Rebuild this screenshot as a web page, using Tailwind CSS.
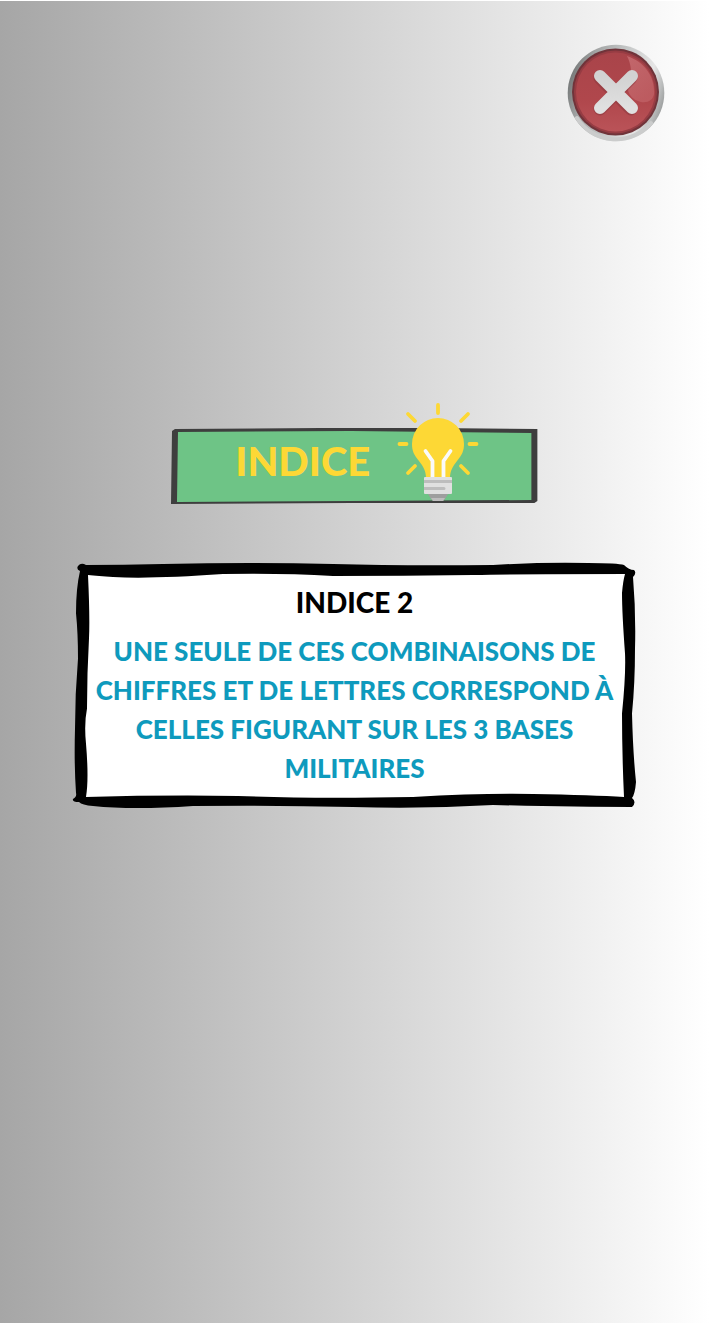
<!DOCTYPE html>
<html lang="fr">
<head>
<meta charset="utf-8">
<meta name="viewport" content="width=device-width, initial-scale=1">
<title>Indice 2</title>
<script src="https://cdn.jsdelivr.net/npm/@tailwindcss/browser@4"></script>
</head>
<body class="min-h-screen bg-white pt-px font-['Lato','Open_Sans',sans-serif]">
<main class="flex min-h-screen flex-col items-center bg-linear-to-r from-[#a6a6a6] to-white px-11 pt-[43px] pb-12">
  <button type="button" aria-label="Fermer" class="size-[98px] cursor-pointer self-end rounded-full">
    <svg viewBox="0 0 98 98" class="size-full" aria-hidden="true">
      <defs>
        <linearGradient id="rim" x1="0" y1=".3" x2="1" y2=".6">
          <stop offset="0" stop-color="#6f7272"/><stop offset=".2" stop-color="#a2a4a4"/><stop offset=".5" stop-color="#c6c8c8"/><stop offset=".8" stop-color="#e6e6e6"/><stop offset=".93" stop-color="#b9bbbb"/><stop offset="1" stop-color="#9b9d9d"/>
        </linearGradient>
        <linearGradient id="red" x1="0" y1="0" x2="0" y2="1">
          <stop offset="0" stop-color="#a9444a"/><stop offset=".6" stop-color="#b0474c"/><stop offset="1" stop-color="#ba5358"/>
        </linearGradient>
        <linearGradient id="shine" x1="0" y1="0" x2=".5" y2="1">
          <stop offset="0" stop-color="#d07a7e" stop-opacity=".65"/><stop offset="1" stop-color="#d07a7e" stop-opacity=".4"/>
        </linearGradient>
        <linearGradient id="cross" x1="0" y1="0" x2="0" y2="1">
          <stop offset="0" stop-color="#d2d2d2"/><stop offset="1" stop-color="#e0e0e0"/>
        </linearGradient>
      </defs>
      <circle cx="49" cy="49" r="48.300" fill="url(#rim)"/>
      <path d="M10 74a46 46 0 0 0 74 5" fill="none" stroke="#cbcccc" stroke-width="4" stroke-linecap="round"/>
      <circle cx="48.500" cy="48" r="43.500" fill="#70343a"/>
      <circle cx="48.500" cy="48" r="41.500" fill="#963c43"/>
      <circle cx="48.500" cy="48" r="39.500" fill="url(#red)"/>
      <path d="M60 12C78 18 88 33 87 50c-1 6-6 9-13 8-12-3-16-13-11-22 2-8 1-16-3-24Z" fill="url(#shine)"/>
      <path d="M33 34 64 65M64 34 33 65" stroke="#85363c" stroke-opacity=".5" stroke-width="13" stroke-linecap="round"/>
      <path d="M33 32 65 64M65 32 33 64" stroke="url(#cross)" stroke-width="12" stroke-linecap="round"/>
    </svg>
  </button>

  <header class="relative mt-[286px] h-[77px] w-[59%] max-w-[367px] min-w-[320px]">
    <svg viewBox="0 0 367 77" preserveAspectRatio="none" class="absolute inset-0 size-full" aria-hidden="true">
      <path d="M1 3 4 1 150 0 260 0 367 1V73L364 75 180 75 0 76Z" fill="#3e3e3e"/>
      <path d="M7 4 180 3 361 5V72L180 73 6 74Z" fill="#6ec486"/>
    </svg>
    <div class="relative flex h-full items-center pr-[60px] pl-16 pb-3">
      <h1 class="text-[40px] leading-none font-black text-[#fdd835]">INDICE</h1>
    </div>
    <svg viewBox="0 0 82 98" class="absolute -top-[25px] right-[59px] h-[98px] w-[82px]" aria-hidden="true">
      <path d="M41 2v8M11 11l7 7M71 11l-7 7M2.500 41h7M72.500 41h7M18 63l-7 7M64 63l7 7" fill="none" stroke="#fdd835" stroke-width="3.800" stroke-linecap="round"/>
      <path d="M29 75c0-7-3-12-7-17-5-6-7-10-7-17a26 26 0 0 1 52 0c0 7-2 11-7 17-4 5-7 10-7 17Z" fill="#fdd835"/>
      <path d="M28.500 48l7 10v16M53.500 48l-7 10v16" fill="none" stroke="#fafafa" stroke-width="3.800" stroke-linecap="round" stroke-linejoin="round"/>
      <rect x="27" y="74" width="28" height="17" rx="1" fill="#e0e0e0"/>
      <path d="M27 77h28v3H27zM27 84h20a1 1 0 0 1 0 3H27z" fill="#bdbdbd"/>
      <path d="M31 91h20l-3 5q-1 2-3 2h-8q-2 0-3-2Z" fill="#9e9e9e"/>
      <path d="M34 95h14l-2 3H36Z" fill="#bdbdbd"/>
    </svg>
  </header>

  <section class="relative mt-[58px] w-full max-w-[563px] px-5 pt-5 pb-5 text-center">
    <svg viewBox="0 0 563 244" preserveAspectRatio="none" class="absolute inset-0 size-full overflow-visible" aria-hidden="true">
      <path d="M11 8 556 8 554 236 9 236Z" fill="#fff"/>
      <path fill-rule="evenodd" d="M5 3Q8-1 13 2Q50 2 90 1Q180-1 260 1Q330 3 420 2Q470-1 515 0Q545 0 551 2Q556 7 561 7Q564 10 560 14Q563 50 562 85Q562 120 559 150Q560 190 563 218Q562 230 559 234Q564 238 559 243Q500 243 420 241Q350 245 280 243Q200 241 120 242Q60 246 20 242Q9 241 6 238Q-1 238 0 235Q4 233 3 229Q1 200 2 165Q2 130 5 95Q5 70 3 50Q3 25 7 8Q3 6 5 3ZM15 12Q17 55 16 75Q14 110 14 145Q11 160 13 180Q16 215 13 233Q90 231 165 232Q240 235 340 233Q410 229 460 230Q520 231 551 233Q549 190 549 150Q553 110 552 90Q549 50 549 30Q550 18 552 11Q450 11 400 12Q330 13 260 13Q210 10 150 11Q80 16 40 14Q25 13 15 12Z" fill="#000"/>
    </svg>
    <div class="relative">
      <h2 class="text-[28px] leading-[39px] font-black text-black">INDICE 2</h2>
      <p class="mt-[10px] text-[26px] leading-[39px] font-black text-[#0e9abd]">UNE SEULE DE CES COMBINAISONS DE CHIFFRES ET DE LETTRES CORRESPOND À CELLES FIGURANT SUR LES 3 BASES MILITAIRES</p>
    </div>
  </section>
</main>
</body>
</html>
